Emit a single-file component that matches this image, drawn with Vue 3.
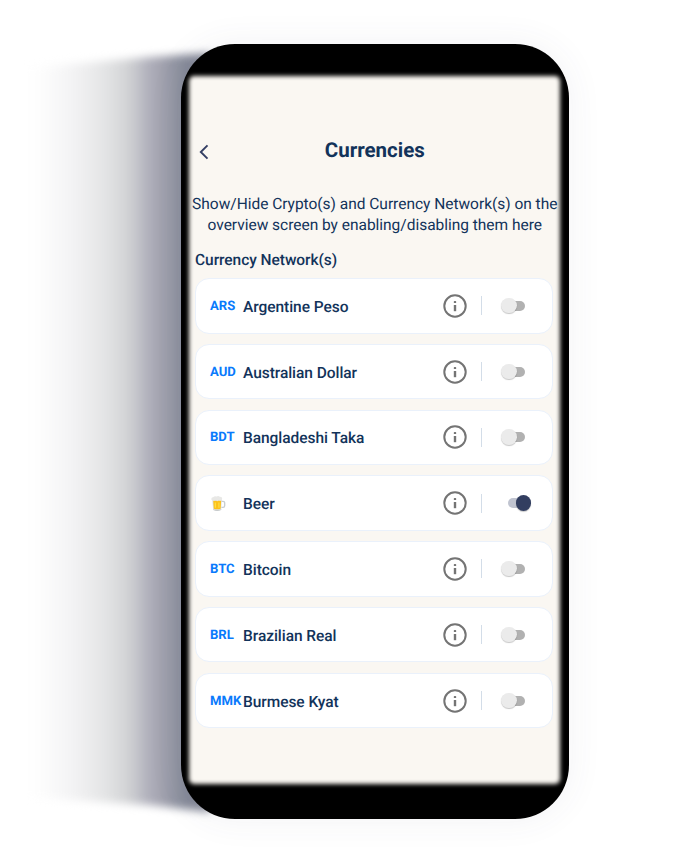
<script setup>
const currencies = [
  { code: 'ARS', name: 'Argentine Peso' },
  { code: 'AUD', name: 'Australian Dollar' },
  { code: 'BDT', name: 'Bangladeshi Taka' },
  { code: '', name: 'Beer', enabled: true },
  { code: 'BTC', name: 'Bitcoin' },
  { code: 'BRL', name: 'Brazilian Real' },
  { code: 'MMK', name: 'Burmese Kyat' },
]
</script>

<template>
  <div class="stage">
    <div class="cast"><div class="cast-fill"></div></div>
    <div class="phone">
      <main class="screen">
        <header class="header">
          <svg class="back" viewBox="0 0 12 18" width="12" height="18">
            <path d="M9.5 2.4 2.8 9l6.7 6.6" fill="none" stroke="#333e63" stroke-width="1.9" />
          </svg>
          <h1>Currencies</h1>
        </header>
        <p class="intro">Show/Hide Crypto(s) and Currency Network(s) on the<br />overview screen by enabling/disabling them here</p>
        <h2>Currency Network(s)</h2>
        <ul class="list">
          <li v-for="c in currencies" :key="c.name" class="card">
            <span v-if="c.code" class="code">{{ c.code }}</span>
            <span v-else class="code">
              <svg class="beer" viewBox="0 0 16 16" width="17" height="17">
                <path d="M10.6 6h1.7q1.5 0 1.5 1.4v2.8q0 1.5-1.5 1.5h-1.7" fill="none" stroke="#c8cdd0" stroke-width="1.3" />
                <path d="M2 4.2 3 13.6q4 1.6 7.6 0l.5-9.4z" fill="#dfe1e2" />
                <path d="M3 5.2 3.6 13q3.2 1 6.4 0l.5-7.8z" fill="#fcc21b" />
                <path d="M5 7v5M8.4 7v5" stroke="#ffe14a" stroke-width="1" />
                <path d="M1.2 4.1Q1 2 3.3 1.9 4.2.7 6 1.4 8 .4 9.2 1.7q2.4-.2 2.3 1.9.1 1.7-1.7 1.7-1 0-2-.1-1 1.3-2 0-1.3.3-2.8.2Q1.4 5.4 1.2 4.1z" fill="#e8e8e6" />
                <path d="M3 13.4q4 1.5 7.6 0v.8q-4 1.6-7.6 0z" fill="#c5c9cb" />
              </svg>
            </span>
            <span class="name">{{ c.name }}</span>
            <svg class="info" viewBox="0 0 24 24" width="24" height="24">
              <circle cx="12" cy="12" r="10.7" fill="none" stroke="#747474" stroke-width="2" />
              <rect x="10.8" y="11" width="2.4" height="6.2" fill="#747474" />
              <rect x="10.8" y="7" width="2.4" height="2.1" rx=".7" fill="#747474" />
            </svg>
            <span class="rule"></span>
            <span class="toggle" :class="{ on: c.enabled }"><span class="knob"></span></span>
          </li>
        </ul>
      </main>
    </div>
  </div>
</template>

<style>
body {
  margin: 0;
  background: #fff;
}
</style>

<style scoped>
.stage {
  position: relative;
  box-sizing: border-box;
  width: 700px;
  height: 850px;
  padding: 44px 131px 31px 181px;
  overflow: hidden;
  background: #fff;
  font-family: Roboto, "Liberation Sans", sans-serif;
  text-rendering: geometricPrecision;
  color: #12335a;
}
.cast {
  position: absolute;
  left: 10px;
  top: 40px;
  width: 240px;
  height: 786px;
  filter: blur(4px);
}
.cast-fill {
  width: 100%;
  height: 100%;
  clip-path: polygon(0 30px, 60px 24px, 140px 17px, 200px 13px, 200px 772px, 140px 765px, 60px 760px, 0 755px);
  background: linear-gradient(90deg, #fff 16px, #fcfcfc 34px, #f5f5f6 57px, #ededee 77px, #e2e3e4 97px, #d4d5d7 115px, #c6c7cc 126px, #b2b2bd 137px, #a1a1ae 153px, #9094a1 167px, #858998 176px);
}
.phone {
  position: relative;
  box-sizing: border-box;
  width: 388px;
  height: 775px;
  padding: 32px 8px 35px;
  border-radius: 54px;
  background: #000;
  box-shadow: 0 0 34px 3px rgba(70, 70, 110, 0.06);
}
.screen {
  position: relative;
  isolation: isolate;
  box-sizing: border-box;
  height: 708px;
  padding: 0 7px 0 6.5px;
}
.screen::before {
  content: "";
  position: absolute;
  z-index: -1;
  inset: 0 1px 0 0;
  border-radius: 5px;
  background: #faf7f2;
  filter: blur(2px);
}
.header {
  display: flex;
  align-items: center;
  height: 148px;
}
.back {
  margin: 4px 0 0 2px;
}
h1 {
  flex: 1;
  margin: 1px 14px 0 0;
  text-align: center;
  font-size: 20.5px;
  line-height: 24px;
  font-weight: 700;
}
.intro {
  margin: -30.5px -10px 0;
  white-space: nowrap;
  text-align: center;
  font-size: 15.5px;
  letter-spacing: -0.02px;
  line-height: 21px;
}
h2 {
  margin: 14px 0 0 -0.5px;
  font-size: 15.5px;
  letter-spacing: -0.05px;
  line-height: 20px;
  font-weight: 500;
}
.list {
  display: flex;
  flex-direction: column;
  gap: 10.3px;
  margin: 8.5px 0 0 -0.5px;
  padding: 0;
  list-style: none;
}
.card {
  display: flex;
  align-items: center;
  box-sizing: border-box;
  width: 358px;
  height: 55.5px;
  padding: 0 19px 0 14px;
  border: 1px solid #eaf1fb;
  border-radius: 14px;
  background: #fff;
}
.code {
  flex: none;
  display: flex;
  width: 33px;
  padding-top: 1px;
  white-space: nowrap;
  font-size: 13.1px;
  font-weight: 700;
  color: #097afc;
}
.name {
  flex: 1;
  font-size: 15.5px;
  letter-spacing: -0.05px;
  font-weight: 500;
  padding-top: 2px;
}
.info {
  flex: none;
}
.rule {
  width: 1px;
  height: 19px;
  margin: 0 19.5px 0 14px;
  background: #d3dde8;
}
.toggle {
  position: relative;
  width: 32px;
  height: 16px;
}
.toggle::before {
  content: "";
  position: absolute;
  left: 7px;
  top: 3px;
  width: 17px;
  height: 10px;
  border-radius: 6px;
  background: #b1b1b1;
}
.knob {
  position: absolute;
  left: 0;
  top: 0;
  width: 15.5px;
  height: 15.5px;
  border-radius: 50%;
  background: #ebebeb;
  box-shadow: 0 1px 1px rgba(0, 0, 0, 0.22);
}
.on::before {
  background: #c0c4d0;
}
.on .knob {
  left: 14.5px;
  background: #323e60;
}
</style>
